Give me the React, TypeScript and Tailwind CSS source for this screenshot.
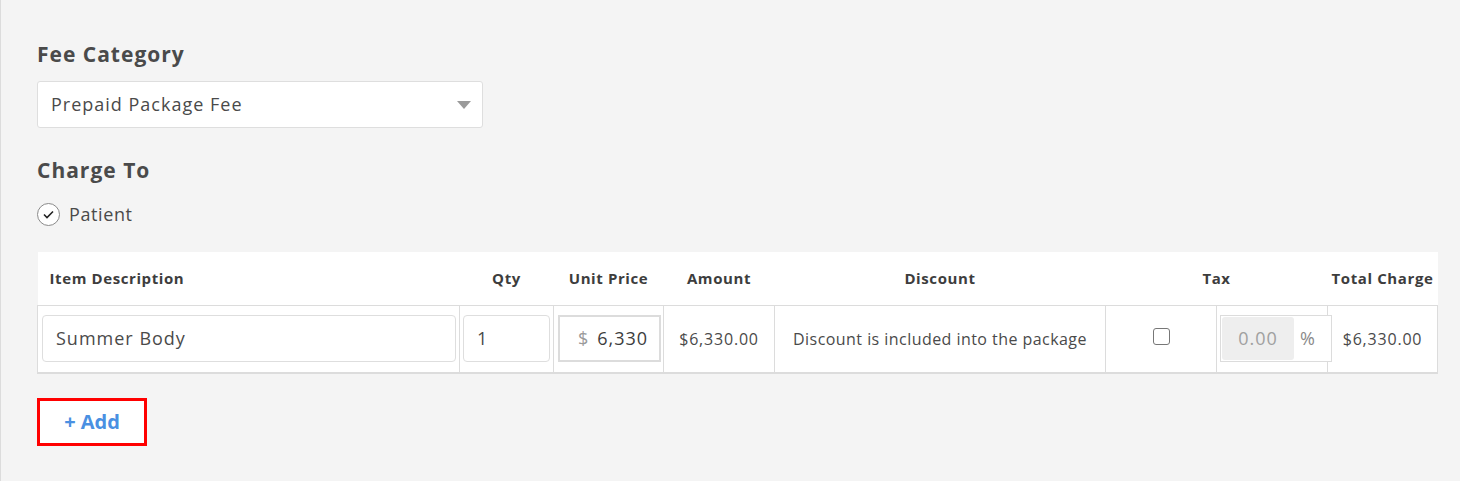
const font = { fontFamily: '"Open Sans", "Liberation Sans", sans-serif' };

const cols = [422, 94, 110, 111, 331, 111, 111, 110];

const App = () => {
  return (
    <div
      className="min-h-[481px] w-[1460px] bg-[#f4f4f4] border-l border-[#dcdcdc] pl-[36px] pt-[40px] text-[#4a4a4a]"
      style={font}
    >
      <h2 className="h-[28px] text-[21px] font-bold leading-[28px] tracking-[1px] text-[#4a4a4a]">
        Fee Category
      </h2>
      <div className="mt-[13px] flex h-[47px] w-[446px] items-center justify-between rounded-[3px] border border-[#dedede] bg-white pl-[13px] pr-[11px]">
        <span className="text-[18px] tracking-[1px] text-[#4a4a4a]">Prepaid Package Fee</span>
        <svg width="14" height="8" viewBox="0 0 14 8">
          <path d="M0 0 H14 L7 8 Z" fill="#9a9a9a" />
        </svg>
      </div>

      <h2 className="mt-[28px] h-[28px] text-[21px] font-bold leading-[28px] tracking-[1px] text-[#4a4a4a]">
        Charge To
      </h2>
      <div className="mt-[18px] flex h-[24px] items-center gap-[9px]">
        <span className="flex h-[23px] w-[23px] items-center justify-center rounded-full border border-[#8a8a8a] bg-white">
          <svg width="11" height="9" viewBox="0 0 11 9">
            <path d="M1 4.5 L4 7.5 L10 1.5" fill="none" stroke="#222" strokeWidth="1.6" />
          </svg>
        </span>
        <span className="text-[18px] tracking-[0.6px] text-[#4a4a4a]">Patient</span>
      </div>

      <table className="mt-[26px] w-[1400px] table-fixed border-collapse">
        <colgroup>
          {cols.map((w, i) => (
            <col key={i} style={{ width: w }} />
          ))}
        </colgroup>
        <thead className="bg-white">
          <tr className="h-[53px] text-[15px] font-bold tracking-[0.6px] text-[#3d3d3d]">
            <th className="pl-[12px] text-left">Item Description</th>
            <th className="text-center">Qty</th>
            <th className="text-center">Unit Price</th>
            <th className="text-center">Amount</th>
            <th className="text-center">Discount</th>
            <th colSpan={2} className="text-center">Tax</th>
            <th className="text-center whitespace-nowrap">Total Charge</th>
          </tr>
        </thead>
        <tbody className="bg-white">
          <tr className="h-[68px] border-x border-t border-b-2 border-[#dcdcdc] text-[16px] text-[#4a4a4a]">
            <td className="border-r border-[#dcdcdc] pl-[4px] pr-[3px]">
              <div className="flex h-[47px] items-center rounded-[4px] border border-[#dedede] pl-[13px] text-[18px] tracking-[1px]">
                Summer Body
              </div>
            </td>
            <td className="border-r border-[#dcdcdc] px-[3px]">
              <div className="flex h-[47px] items-center rounded-[4px] border border-[#dedede] pl-[13px] text-[18px]">
                1
              </div>
            </td>
            <td className="border-r border-[#dcdcdc] pl-[4px] pr-[2px]">
              <div className="flex h-[47px] items-center overflow-hidden whitespace-nowrap border-2 border-[#dcdcdc] pl-[18px] pr-[12px] text-[18px] tracking-[1px]">
                <span className="text-[#9a9a9a]">$</span>
                <span className="ml-[8px] overflow-hidden text-[#3d3d3d]">6,330</span>
              </div>
            </td>
            <td className="border-r border-[#dcdcdc] text-center tracking-[0.8px]">$6,330.00</td>
            <td className="border-r border-[#dcdcdc] text-center tracking-[0.45px]">
              Discount is included into the package
            </td>
            <td className="border-r border-[#dcdcdc]">
              <div className="flex justify-center">
                <span className="mb-[4px] block h-[17px] w-[17px] rounded-[3px] border-[1.5px] border-[#777]" />
              </div>
            </td>
            <td className="relative border-r border-[#dcdcdc] pl-[3px]">
              <div className="relative z-10 flex h-[47px] w-[112px] items-center border border-[#dcdcdc] bg-white p-[1px]">
                <div className="flex h-full w-[72px] items-center justify-center rounded-[3px] bg-[#eeeeee] text-[18px] tracking-[1px] text-[#a0a0a0]">
                  0.00
                </div>
                <span className="ml-[6px] text-[18px] text-[#8a8a8a]">%</span>
              </div>
            </td>
            <td className="text-center tracking-[0.8px]">$6,330.00</td>
          </tr>
        </tbody>
      </table>

      <button className="mt-[24px] flex h-[48px] w-[110px] items-center justify-center border-[3px] border-[#ff0000] bg-white text-[20px] font-bold text-[#4a90e2]">
        + Add
      </button>
    </div>
  );
};

export default App;
